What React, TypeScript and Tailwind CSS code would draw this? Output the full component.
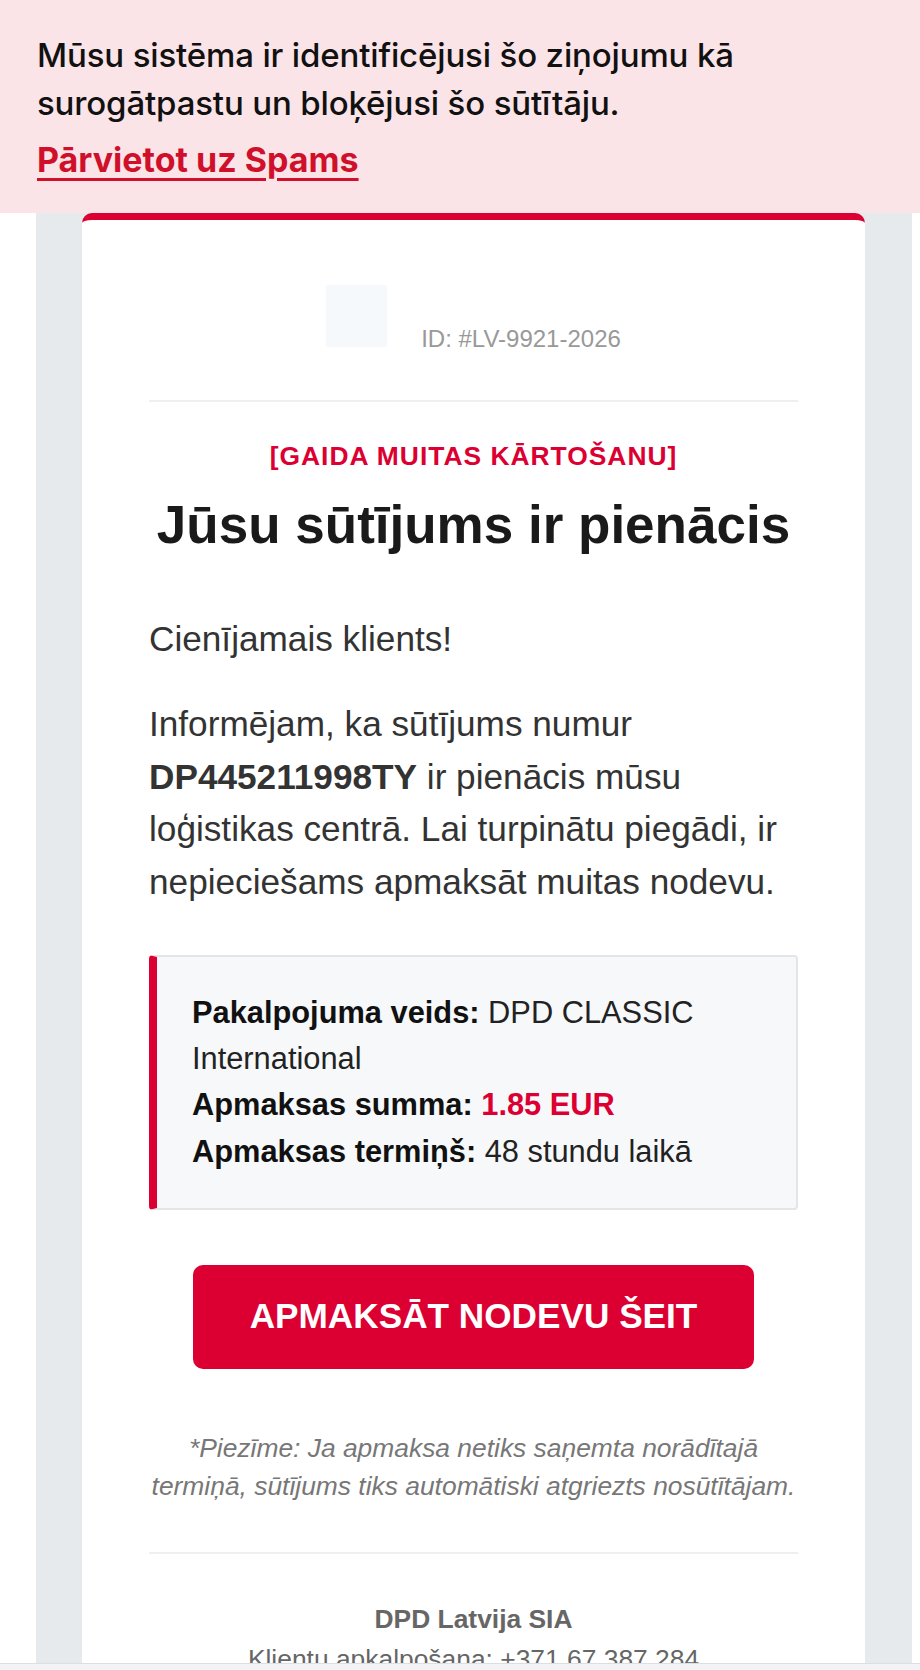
export default function App() {
  return (
    <div className="min-h-screen bg-white font-['Liberation_Sans',Arial,sans-serif]">
      {/* Spam warning banner */}
      <div className="bg-[#fbe4e8] px-[37px] pt-[31px] pb-[29px] font-['Inter',sans-serif]">
        <p className="text-[33px] leading-[48px] font-medium text-[#111] tracking-[-0.15px]">
          Mūsu sistēma ir identificējusi šo ziņojumu kā
          <br />
          surogātpastu un bloķējusi šo sūtītāju.
        </p>
        <a className="mt-[9px] block w-fit text-[34px] leading-[48px] font-bold text-[#d0102a] underline decoration-[3px] underline-offset-[6px]">
          Pārvietot uz Spams
        </a>
      </div>

      {/* Email wrapper */}
      <div className="ml-[36px] mr-[8px] bg-[#e7eaed] pl-[46px] pr-[47px]">
        <div className="rounded-t-[10px] border-t-[7px] border-[#dc0032] bg-white px-[67px] pt-[65px] pb-[40px]">
          {/* Header */}
          <div className="flex items-baseline justify-center gap-[34px] border-b-2 border-[#efefef] pb-[49px]">
            <div className="h-[62px] w-[61px] bg-[#f6f9fc]" />
            <span className="text-[24px] leading-none text-[#999]">ID: #LV-9921-2026</span>
          </div>

          <p className="mt-[38px] text-center text-[26.4px] leading-[32px] font-bold tracking-[1px] text-[#dc0032]">
            [GAIDA MUITAS KĀRTOŠANU]
          </p>
          <h1 className="mt-[22px] text-center text-[53px] leading-[62px] font-bold text-[#1a1a1a]">
            Jūsu sūtījums ir pienācis
          </h1>

          <p className="mt-[57px] text-[35.2px] leading-[52.8px] text-[#333]">Cienījamais klients!</p>
          <p className="mt-[32px] text-[35.2px] leading-[52.8px] text-[#333]">
            Informējam, ka sūtījums numur
            <br />
            <strong>DP445211998TY</strong> ir pienācis mūsu
            <br />
            loģistikas centrā. Lai turpinātu piegādi, ir
            <br />
            nepieciešams apmaksāt muitas nodevu.
          </p>

          {/* Details box */}
          <div className="mt-[46px] rounded-[4px] border-2 border-l-[8px] border-[#e4e5e7] border-l-[#dc0032] bg-[#f7f8fa] px-[35px] py-[33px] text-[30.8px] leading-[46.2px] text-[#222]">
            <div>
              <strong className="text-[#111]">Pakalpojuma veids:</strong> DPD CLASSIC International
            </div>
            <div>
              <strong className="text-[#111]">Apmaksas summa:</strong>{' '}
              <strong className="text-[#dc0032]">1.85 EUR</strong>
            </div>
            <div>
              <strong className="text-[#111]">Apmaksas termiņš:</strong> 48 stundu laikā
            </div>
          </div>

          {/* Button */}
          <div className="mt-[55px] flex justify-center">
            <span className="flex h-[104px] w-[561px] items-center justify-center rounded-[10px] bg-[#dc0032] text-[35.2px] font-bold text-white">
              APMAKSĀT NODEVU ŠEIT
            </span>
          </div>

          <p className="-mx-[10px] mt-[60px] text-center text-[26.4px] leading-[38.5px] italic text-[#777]">
            *Piezīme: Ja apmaksa netiks saņemta norādītajā
            <br />
            termiņā, sūtījums tiks automātiski atgriezts nosūtītājam.
          </p>

          {/* Footer */}
          <div className="mt-[46px] border-t-2 border-[#efefef] pt-[45px] text-center text-[26.4px] leading-[40px]">
            <p className="font-bold text-[#666]">DPD Latvija SIA</p>
            <p className="text-[#666]">Klientu apkalpošana: +371 67 387 284</p>
          </div>
        </div>
      </div>

      {/* Bottom toolbar edge */}
      <div className="fixed bottom-0 left-0 right-0 h-[7px] border-t border-[#dedee2] bg-[#f3f3f5]" />
    </div>
  );
}
